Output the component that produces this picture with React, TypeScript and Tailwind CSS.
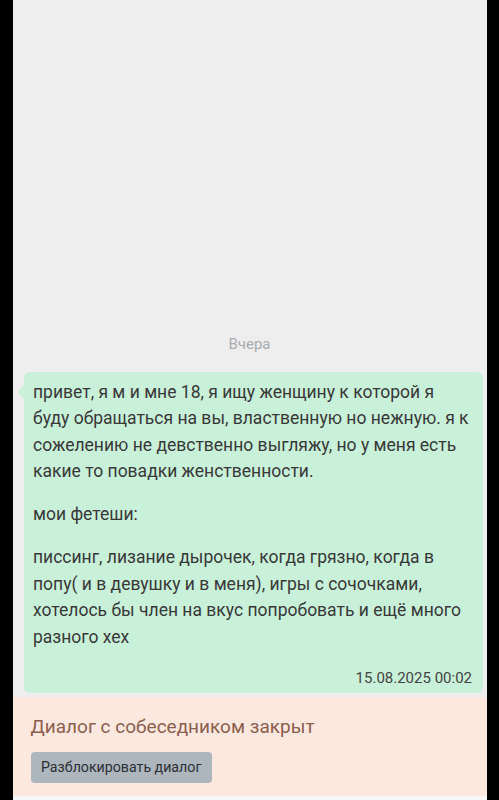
import React from 'react'

const font = { fontFamily: 'Roboto, "Noto Sans", sans-serif' }

export default function App() {
  return (
    <div className="flex h-[800px] w-full bg-black" style={font}>
      <div className="w-[12.5px] shrink-0 bg-black" />
      <div className="flex flex-1 flex-col bg-[#eeeeee]">
        <div className="flex flex-1 flex-col justify-end pb-[4px]">
          <div className="mb-[18px] text-center text-[15px] leading-[20px] text-[#a9adb1]">Вчера</div>
          <div className="relative ml-[11.5px] mr-[3.5px] rounded-[6px] bg-[#c9f0d8] pl-[9px] pr-[11px] pt-[7px] pb-[5px] text-[17.5px] leading-[26.5px] text-[#383838]">
            <div className="absolute left-[-6px] top-[13px] h-0 w-0 border-y-[7px] border-r-[6px] border-y-transparent border-r-[#c9f0d8]" />
            <p>
              привет, я м и мне 18, я ищу женщину к которой я буду обращаться на вы, влаственную но нежную. я к
              сожелению не девственно выгляжу, но у меня есть какие то повадки женственности.
            </p>
            <p className="mt-[16.5px]">мои фетеши:</p>
            <p className="mt-[16.5px]">
              писсинг, лизание дырочек, когда грязно, когда в попу( и в девушку и в меня), игры с сочочками,
              хотелось бы член на вкус попробовать и ещё много разного хех
            </p>
            <div className="mt-[18px] text-right text-[15px] leading-[20px] text-[#444444]">15.08.2025 00:02</div>
          </div>
        </div>
        <div className="flex flex-col items-start bg-[#fde8df] px-[18px] pt-[17px] pb-[13px]">
          <div className="text-[19px] leading-[26px] text-[#8b5e4e]">Диалог с собеседником закрыт</div>
          <button className="mt-[12px] h-[31px] rounded-[4px] bg-[#adb5bd] px-[10.5px] text-[14.2px] text-[#2b2f33]">
            Разблокировать диалог
          </button>
        </div>
        <div className="h-[4px] bg-[#f7f7f7]" />
      </div>
      <div className="w-[12.5px] shrink-0 bg-black" />
    </div>
  )
}
